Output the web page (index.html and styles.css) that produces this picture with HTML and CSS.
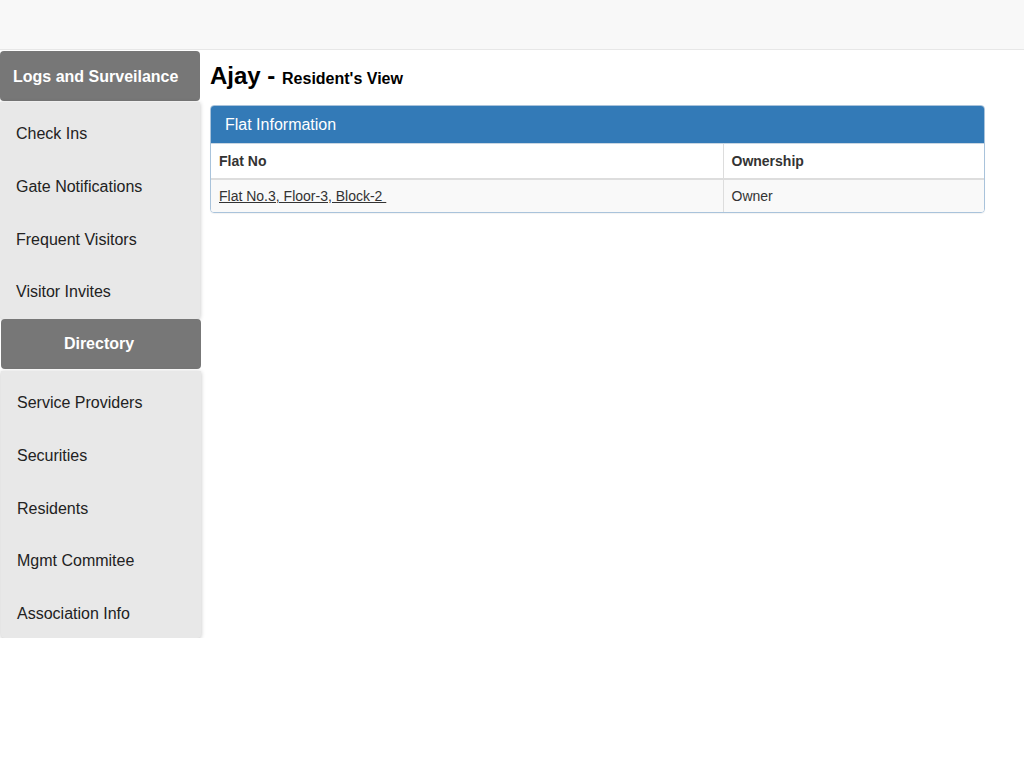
FILE: index.html
```html
<!DOCTYPE html>
<html>
<head>
<meta charset="utf-8">
<link rel="stylesheet" href="styles.css">
</head>
<body>
<div class="navbar"></div>
<div class="layout">
  <aside class="sidebar">
    <div class="group">
      <div class="group-head first">Logs and Surveilance</div>
      <ul class="menu">
        <li>Check Ins</li>
        <li>Gate Notifications</li>
        <li>Frequent Visitors</li>
        <li>Visitor Invites</li>
      </ul>
    </div>
    <div class="group group-dir">
      <div class="group-head center">Directory</div>
      <ul class="menu menu-dir">
        <li>Service Providers</li>
        <li>Securities</li>
        <li>Residents</li>
        <li>Mgmt Commitee</li>
        <li>Association Info</li>
      </ul>
    </div>
  </aside>
  <main class="content">
    <h3 class="title">Ajay - <small>Resident's View</small></h3>
    <div class="panel">
      <div class="panel-heading">Flat Information</div>
      <table class="table">
        <colgroup><col class="c1"><col></colgroup>
        <thead>
          <tr><th>Flat No</th><th>Ownership</th></tr>
        </thead>
        <tbody>
          <tr><td><a href="#" class="link">Flat No.3, Floor-3, Block-2&nbsp;</a></td><td>Owner</td></tr>
        </tbody>
      </table>
    </div>
  </main>
</div>
</body>
</html>
```

FILE: styles.css
```css
* { box-sizing: border-box; }
html, body { margin: 0; padding: 0; background: #fff; }
body { font-family: "Liberation Sans", Arial, sans-serif; color: #333; font-size: 14px; }

.navbar {
  height: 50px;
  background: #f8f8f8;
  border-bottom: 1px solid #e7e7e7;
}

.layout {
  display: flex;
  align-items: flex-start;
  padding-top: 1px;
}

.sidebar {
  width: 201px;
  flex: none;
}

.group-head {
  height: 50px;
  width: 200px;
  background: #777;
  color: #fff;
  font-weight: bold;
  font-size: 16px;
  line-height: 50px;
  padding-left: 13px;
  border-radius: 4px;
}
.group-head.first { line-height: 51px; }
.group-head.center { text-align: center; padding-left: 0; padding-right: 4px; }

.group-dir { margin-left: 1px; }

.menu {
  list-style: none;
  margin: 1px 0 0;
  padding: 6px 0 0;
  width: 200px;
  background: #e8e8e8;
  border-radius: 0 0 4px 4px;
  box-shadow: 0 1px 4px rgba(0,0,0,0.25);
}
.menu li {
  height: 52.75px;
  line-height: 52.75px;
  padding-left: 16px;
  font-size: 16px;
  color: #222;
}
.menu-dir { margin-top: 2px; padding-top: 6px; }
.menu-dir li:last-child { height: 50px; line-height: 52px; }

.content {
  margin-left: 9px;
  width: 775px;
}

.title {
  margin: 12px 0 0;
  font-size: 24px;
  font-weight: bold;
  color: #000;
  line-height: 26px;
  height: 42px;
}
.title small {
  font-size: 16px;
  font-weight: bold;
  color: #000;
}

.panel {
  border: 1px solid #a9c3db;
  border-radius: 4px;
  overflow: hidden;
  box-shadow: 0 1px 1px rgba(0,0,0,0.05);
}
.panel-heading {
  background: #337ab7;
  color: #fff;
  font-size: 16px;
  line-height: 18px;
  padding: 11px 15px 9px 15px;
  border-bottom: 1px solid #c9d6e2;
  margin: -1px -1px 0;
}

.table {
  width: 100%;
  border-collapse: collapse;
  font-size: 14px;
}
.table col.c1 { width: 512px; }
.table th, .table td {
  padding: 8px 8px;
  line-height: 18px;
  text-align: left;
  border-left: 1px solid #ddd;
}
.table th:first-child, .table td:first-child { border-left: 0; }
.table th {
  font-weight: bold;
  border-bottom: 2px solid #ddd;
  background: #fff;
}
.table td { background: #f9f9f9; padding-top: 7px; padding-bottom: 7px; }
.link { color: #333; text-decoration: underline; }
```
